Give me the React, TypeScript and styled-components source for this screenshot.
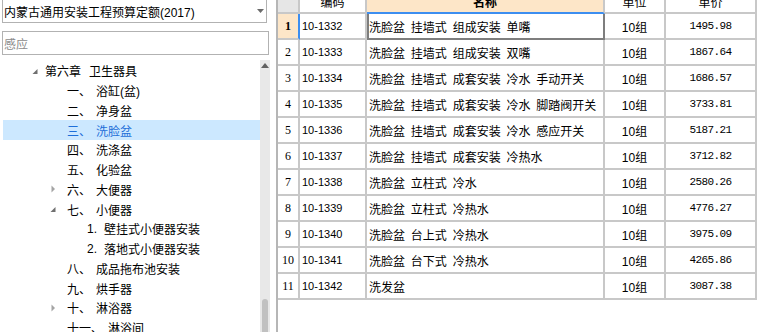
import * as React from "react";
import styled, { createGlobalStyle } from "styled-components";

const GlobalStyle = createGlobalStyle`
  html, body {
    margin: 0;
    padding: 0;
    background: #fff;
    overflow: hidden;
  }
  body {
    font-family: "Liberation Sans", "Noto Sans CJK SC", sans-serif;
    font-size: 12px;
    color: #000;
  }
`;

const Page = styled.div`
  display: flex;
  width: 772px;
  height: 332px;
  overflow: hidden;
`;

const LeftPane = styled.div`
  width: 268px;
  padding-left: 2px;
  display: flex;
  flex-direction: column;
`;

const Combo = styled.div`
  width: 265px;
  height: 23px;
  box-sizing: border-box;
  border: 1px solid #b2b2b2;
  border-top: none;
  display: flex;
  align-items: center;
  justify-content: space-between;
  padding: 0 2px 0 1px;
  white-space: nowrap;
`;

const SearchBox = styled.div`
  width: 267px;
  height: 24px;
  margin-top: 8px;
  box-sizing: border-box;
  border: 1px solid #b2b2b2;
  display: flex;
  align-items: center;
  padding-left: 1px;
  color: #8c8c8c;
`;

const TreeArea = styled.div`
  flex: 1;
  min-height: 0;
  margin-top: 5px;
  display: flex;
`;

const TreeList = styled.div`
  flex: 1;
  padding: 1px 0 0 1px;
  overflow: hidden;
`;

const TreeRow = styled.div<{ $indent: number; $selected?: boolean }>`
  height: 19.75px;
  display: flex;
  align-items: center;
  padding-left: ${({ $indent }) => $indent}px;
  white-space: nowrap;
  background: ${({ $selected }) => ($selected ? "#cce8ff" : "transparent")};
  color: ${({ $selected }) => ($selected ? "#1e6fd9" : "#000")};
`;

const ToggleSlot = styled.span<{ $gap: number }>`
  width: 10px;
  height: 10px;
  flex: none;
  margin-right: ${({ $gap }) => $gap}px;
  display: flex;
`;

const NodeLabel = styled.span<{ $gap: number }>`
  margin-left: ${({ $gap }) => $gap}px;
`;

const ScrollTrack = styled.div`
  width: 10px;
  background: #e8e8e8;
  display: flex;
  flex-direction: column;
  align-items: center;
`;

const ScrollArrow = styled.svg`
  margin-top: 3px;
`;

const ScrollSpacer = styled.div`
  flex: 1;
`;

const ScrollThumb = styled.div`
  width: 6px;
  height: 33px;
  background: #c1c1c1;
  border-radius: 3px 3px 0 0;
`;

const RightPane = styled.div`
  flex: 1;
  margin-left: 6px;
  border-left: 2px solid #b6b6b6;
  overflow: hidden;
`;

const Grid = styled.table`
  border-collapse: separate;
  border-spacing: 0;
  table-layout: fixed;
  width: 479px;
  margin-top: -10px;
`;

const HeadCell = styled.th<{ $kind?: "num" | "current" }>`
  box-sizing: border-box;
  height: 24px;
  padding: 0;
  font-weight: ${({ $kind }) => ($kind === "current" ? "bold" : "normal")};
  text-align: center;
  border-right: 2px solid #c8c8c8;
  border-bottom: 2px solid ${({ $kind }) => ($kind === "current" ? "#3d8ef0" : "#c8c8c8")};
  background: ${({ $kind }) =>
    $kind === "num" ? "#e6e6e6" : $kind === "current" ? "#fde6c8" : "#fff"};
`;

const Cell = styled.td<{
  $align?: "left" | "center";
  $selected?: boolean;
}>`
  box-sizing: border-box;
  height: 26px;
  padding: 0 0 0 ${({ $align }) => ($align === "left" ? 2 : 0)}px;
  text-align: ${({ $align }) => $align || "center"};
  vertical-align: middle;
  white-space: nowrap;
  overflow: hidden;
  border-right: 2px solid ${({ $selected }) => ($selected ? "#7e7e7e" : "#c8c8c8")};
  border-bottom: 2px solid ${({ $selected }) => ($selected ? "#7e7e7e" : "#c8c8c8")};
  box-shadow: ${({ $selected }) => ($selected ? "inset 2px 0 0 #7e7e7e" : "none")};
`;

const RowNumCell = styled(Cell)<{ $current?: boolean }>`
  font-family: "Liberation Serif", serif;
  font-size: 12px;
  font-weight: ${({ $current }) => ($current ? "bold" : "normal")};
  background: ${({ $current }) => ($current ? "#fde6c8" : "#fff")};
  border-right-color: ${({ $current }) => ($current ? "#3d8ef0" : "#c8c8c8")};
`;

const CodeCell = styled(Cell)`
  font-size: 11px;
`;

const NameCell = styled(Cell)`
  word-spacing: 2.5px;
`;

const PriceCell = styled(Cell)`
  font-family: "Liberation Mono", monospace;
  font-size: 11px;
  letter-spacing: -0.6px;
`;

type TreeNode = {
  level: 1 | 2 | 3;
  num: string;
  label: string;
  toggle?: "open" | "closed";
  selected?: boolean;
};

const tree: TreeNode[] = [
  { level: 1, num: "第六章", label: "卫生器具", toggle: "open" },
  { level: 2, num: "一、", label: "浴缸(盆)" },
  { level: 2, num: "二、", label: "净身盆" },
  { level: 2, num: "三、", label: "洗脸盆", selected: true },
  { level: 2, num: "四、", label: "洗涤盆" },
  { level: 2, num: "五、", label: "化验盆" },
  { level: 2, num: "六、", label: "大便器", toggle: "closed" },
  { level: 2, num: "七、", label: "小便器", toggle: "open" },
  { level: 3, num: "1.", label: "壁挂式小便器安装" },
  { level: 3, num: "2.", label: "落地式小便器安装" },
  { level: 2, num: "八、", label: "成品拖布池安装" },
  { level: 2, num: "九、", label: "烘手器" },
  { level: 2, num: "十、", label: "淋浴器", toggle: "closed" },
  { level: 2, num: "十一、", label: "淋浴间" },
];

const levelLayout = {
  1: { indent: 28, slotGap: 4, labelGap: 8 },
  2: { indent: 46, slotGap: 8, labelGap: 5 },
  3: { indent: 66, slotGap: 8, labelGap: 7 },
};

const rows = [
  ["10-1332", "洗脸盆 挂墙式 组成安装 单嘴", "1495.98"],
  ["10-1333", "洗脸盆 挂墙式 组成安装 双嘴", "1867.64"],
  ["10-1334", "洗脸盆 挂墙式 成套安装 冷水 手动开关", "1686.57"],
  ["10-1335", "洗脸盆 挂墙式 成套安装 冷水 脚踏阀开关", "3733.81"],
  ["10-1336", "洗脸盆 挂墙式 成套安装 冷水 感应开关", "5187.21"],
  ["10-1337", "洗脸盆 挂墙式 成套安装 冷热水", "3712.82"],
  ["10-1338", "洗脸盆 立柱式 冷水", "2580.26"],
  ["10-1339", "洗脸盆 立柱式 冷热水", "4776.27"],
  ["10-1340", "洗脸盆 台上式 冷热水", "3975.09"],
  ["10-1341", "洗脸盆 台下式 冷热水", "4265.86"],
  ["10-1342", "洗发盆", "3087.38"],
];

function Caret({ state }: { state?: "open" | "closed" }) {
  if (state === "open") {
    return (
      <svg width="10" height="10" viewBox="0 0 10 10">
        <polygon points="6.5,3 6.5,8 1.5,8" fill="#6f6f6f" />
      </svg>
    );
  }
  if (state === "closed") {
    return (
      <svg width="10" height="10" viewBox="0 0 10 10">
        <polygon points="2.5,1.5 6,5 2.5,8.5" fill="#a4a4a4" />
      </svg>
    );
  }
  return null;
}

function Tree() {
  return (
    <TreeList>
      {tree.map((n, i) => {
        const l = levelLayout[n.level];
        return (
          <TreeRow key={i} $indent={l.indent} $selected={n.selected}>
            <ToggleSlot $gap={l.slotGap}>
              <Caret state={n.toggle} />
            </ToggleSlot>
            <span>{n.num}</span>
            <NodeLabel $gap={l.labelGap}>{n.label}</NodeLabel>
          </TreeRow>
        );
      })}
    </TreeList>
  );
}

export default function App() {
  return (
    <>
      <GlobalStyle />
      <Page>
        <LeftPane>
          <Combo>
            <span>内蒙古通用安装工程预算定额(2017)</span>
            <svg width="7" height="4" viewBox="0 0 7 4">
              <polygon points="0,0 7,0 3.5,4" fill="#6b6b6b" />
            </svg>
          </Combo>
          <SearchBox>感应</SearchBox>
          <TreeArea>
            <Tree />
            <ScrollTrack>
              <ScrollArrow width="8" height="5" viewBox="0 0 8 5">
                <polygon points="0,5 8,5 4,0" fill="#606060" />
              </ScrollArrow>
              <ScrollSpacer />
              <ScrollThumb />
            </ScrollTrack>
          </TreeArea>
        </LeftPane>
        <RightPane>
          <Grid>
            <colgroup>
              <col style={{ width: 22 }} />
              <col style={{ width: 67 }} />
              <col style={{ width: 238 }} />
              <col style={{ width: 61 }} />
              <col style={{ width: 91 }} />
            </colgroup>
            <thead>
              <tr>
                <HeadCell $kind="num" />
                <HeadCell>编码</HeadCell>
                <HeadCell $kind="current">名称</HeadCell>
                <HeadCell>单位</HeadCell>
                <HeadCell>单价</HeadCell>
              </tr>
            </thead>
            <tbody>
              {rows.map(([code, name, price], i) => (
                <tr key={code}>
                  <RowNumCell $current={i === 0}>{i + 1}</RowNumCell>
                  <CodeCell $align="left">{code}</CodeCell>
                  <NameCell $align="left" $selected={i === 0}>
                    {name}
                  </NameCell>
                  <Cell>10组</Cell>
                  <PriceCell>{price}</PriceCell>
                </tr>
              ))}
            </tbody>
          </Grid>
        </RightPane>
      </Page>
    </>
  );
}
